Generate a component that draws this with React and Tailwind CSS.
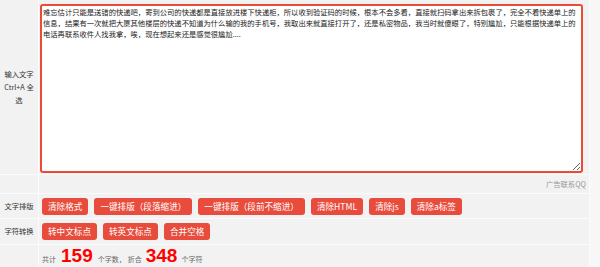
const TEXT =
	"难忘估计只能是送错的快递吧，寄到公司的快递都是直接放进楼下快递柜，所以收到验证码的时候，根本不会多看，直接就扫码拿出来拆包裹了，完全不看快递单上的信息，结果有一次就把大厦其他楼层的快递不知道为什么输的我的手机号，我取出来就直接打开了，还是私密物品，我当时就傻眼了，特别尴尬，只能根据快递单上的电话再联系收件人找我拿，唉，现在想起来还是感觉很尴尬....";

const FONT = { fontFamily: '"Noto Sans CJK SC", "Liberation Sans", sans-serif' };

const LAYOUT_BUTTONS = ["清除格式", "一键排版（段落缩进）", "一键排版（段前不缩进）", "清除HTML", "清除js", "清除a标签"];
const CONVERT_BUTTONS = ["转中文标点", "转英文标点", "合并空格"];

const Btn = ({ children }) => (
	<button className="h-[17px] px-[6px] rounded-[3px] bg-[#e74c3c] text-white text-[8.6px] leading-[17px] whitespace-nowrap">
		{children}
	</button>
);

const Label = ({ children }) => (
	<div className="w-[39px] shrink-0 border-r border-[#fbfbfb] flex items-center justify-center text-center text-[7.3px] leading-[13px] text-[#333]">
		{children}
	</div>
);

export default function App() {
	return (
		<div className="w-[600px] h-[267px] overflow-hidden bg-[#f7f7f7]" style={FONT}>
			<div className="w-[590px] bg-[#f2f2f2] border-r border-[#fbfbfb]">
				<div className="flex h-[175px] border-b border-[#fbfbfb]">
					<Label>
						<div>
							输入文字
							<br />
							Ctrl+A 全
							<br />
							选
						</div>
					</Label>
					<div className="flex-1 pl-[1px] pr-[5px] pt-[4px]">
						<textarea
							defaultValue={TEXT}
							className="block w-[543px] h-[169px] resize-y border-2 border-[#ea4b36] rounded-[3px] bg-white px-[1px] py-[1px] text-[7.3px] leading-[11px] text-[#222] outline-none"
							style={FONT}
						/>
					</div>
				</div>

				<div className="flex h-[19px] border-b border-[#fbfbfb]">
					<div className="w-[39px] shrink-0 border-r border-[#fbfbfb]" />
					<div className="flex-1 flex items-center justify-end pr-[3px] text-[7.3px] text-[#999]">广告联系QQ</div>
				</div>

				<div className="flex h-[25px] border-b border-[#fbfbfb]">
					<Label>文字排版</Label>
					<div className="flex-1 flex items-center gap-[6px] pl-[3px]">
						{LAYOUT_BUTTONS.map((b) => (
							<Btn key={b}>{b}</Btn>
						))}
					</div>
				</div>

				<div className="flex h-[26px] border-b border-[#fbfbfb]">
					<Label>字符转换</Label>
					<div className="flex-1 flex items-center gap-[6px] pl-[3px]">
						{CONVERT_BUTTONS.map((b) => (
							<Btn key={b}>{b}</Btn>
						))}
					</div>
				</div>

				<div className="flex h-[30px]">
					<div className="w-[39px] shrink-0 border-r border-[#fbfbfb]" />
					<div className="flex-1 flex items-baseline pl-[3px] pt-[1px] text-[7px] text-[#666]">
						<span>共计</span>
						<b className="mx-[5px] text-[19px] leading-[20px] text-[#ff0000]" style={{ fontFamily: '"Liberation Sans", sans-serif' }}>
							159
						</b>
						<span>个字数，</span>
						<span className="ml-[2px]">折合</span>
						<b className="mx-[4px] text-[19px] leading-[20px] text-[#ff0000]" style={{ fontFamily: '"Liberation Sans", sans-serif' }}>
							348
						</b>
						<span>个字符</span>
					</div>
				</div>
			</div>
		</div>
	);
}
